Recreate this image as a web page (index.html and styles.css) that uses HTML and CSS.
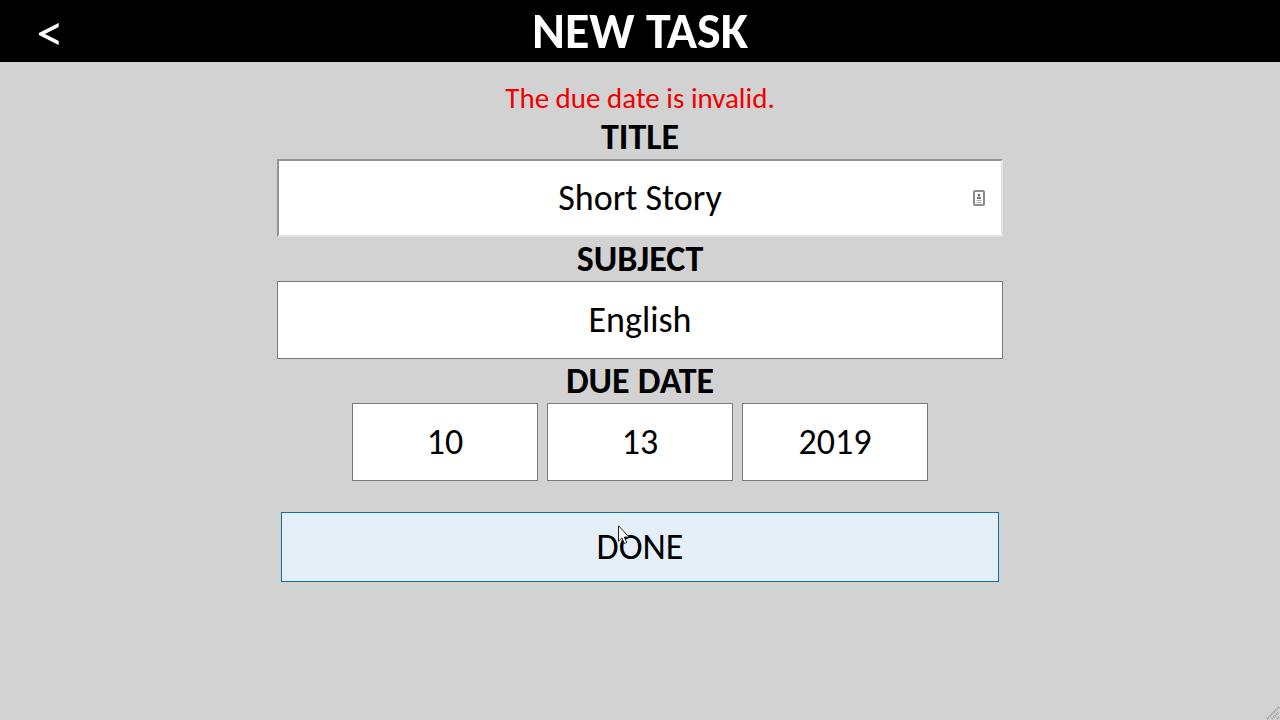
FILE: index.html
```html
<!DOCTYPE html>
<html lang="en">
<head>
<meta charset="utf-8">
<title>New Task</title>
<meta name="viewport" content="width=device-width, initial-scale=1">
<link rel="stylesheet" href="styles.css">
</head>
<body class="page">
<header class="topbar">
  <button class="back" type="button">&lt;</button>
  <h1 class="heading">NEW TASK</h1>
</header>
<main class="content">
  <form class="form">
    <p class="error" role="alert">The due date is invalid.</p>
    <label class="label" for="title">TITLE</label>
    <div class="field">
      <input class="input input-title" id="title" type="text" value="Short Story">
      <svg class="autofill" viewBox="0 0 12 16" aria-hidden="true">
        <rect x="1" y="1" width="10" height="14" rx="1" fill="#fff" stroke="#8c8c8c" stroke-width="2"/>
        <circle cx="6" cy="5" r="1.3" fill="#777"/>
        <path d="M4 9V7.5L5 6.5h2l1 1V9z" fill="#777"/>
        <path d="M3.5 10.5h5M3.5 12.5h5" stroke="#aaa"/>
      </svg>
    </div>
    <label class="label" for="subject">SUBJECT</label>
    <input class="input" id="subject" type="text" value="English">
    <label class="label" for="month">DUE DATE</label>
    <div class="dates">
      <input class="input" id="month" type="text" value="10">
      <input class="input" type="text" aria-label="Day" value="13">
      <input class="input" type="text" aria-label="Year" value="2019">
    </div>
    <button class="done" type="button">DONE</button>
  </form>
</main>
<svg class="cursor" viewBox="0 0 12 20" aria-hidden="true">
  <path d="M.5.8v15.4l3.4-3.3 2.4 5.6 2.4-1-2.4-5.4h4.9z" fill="#fff" stroke="#222"/>
</svg>
<svg class="grip" viewBox="0 0 14 14" aria-hidden="true">
  <path d="M1 13L13 1M6 13l7-7M11 13l2-2" stroke="#999" stroke-width="2" stroke-dasharray="1 1"/>
</svg>
</body>
</html>
```

FILE: styles.css
```css
* { box-sizing: border-box; }
.page {
  margin: 0;
  min-height: 100vh;
  background: #d2d2d2;
  color: #000;
  font-family: Calibri, Carlito, Lato, sans-serif;
  font-size: 36px;
}
.topbar {
  display: grid;
  grid-template-columns: 100px 1fr 100px;
  align-items: center;
  height: 62px;
  background: #000;
  color: #fff;
}
.back {
  height: 62px;
  padding: 4px 0 0;
  border: 0;
  background: none;
  color: inherit;
  font: 54px/58px Calibri, Carlito, Lato, sans-serif;
}
.heading {
  margin: 0;
  font-size: 50px;
  line-height: 62px;
  text-align: center;
}
.content { padding: 19px 20px; }
.form {
  display: flex;
  flex-direction: column;
  max-width: 726px;
  margin: 0 auto;
}
.error {
  margin: 0;
  color: #f00000;
  font-size: 29px;
  line-height: 34px;
  text-align: center;
}
.label {
  font-weight: bold;
  line-height: 44px;
  text-align: center;
}
.field { position: relative; display: flex; }
.input {
  width: 100%;
  min-width: 0;
  height: 78px;
  padding: 0 20px;
  border: 1px solid #7a7a7a;
  border-radius: 0;
  background: #fff;
  color: inherit;
  font: inherit;
  text-align: center;
  outline: 0;
}
.input-title {
  border: 2px solid;
  border-color: #939393 #e3e3e3 #e3e3e3 #939393;
}
.autofill {
  position: absolute;
  top: 31px;
  right: 18px;
  width: 12px;
  height: 16px;
}
.dates {
  display: grid;
  grid-template-columns: repeat(3, 1fr);
  gap: 9px;
  margin: 0 75px;
}
.done {
  height: 70px;
  margin: 31px 4px 0;
  border: 1px solid #0f6ea8;
  background: #e5eff8;
  color: inherit;
  font: inherit;
}
.cursor {
  position: absolute;
  top: 525px;
  left: 618px;
  width: 12px;
  height: 20px;
}
.grip {
  position: fixed;
  right: 0;
  bottom: 0;
  width: 14px;
  height: 14px;
}
```
